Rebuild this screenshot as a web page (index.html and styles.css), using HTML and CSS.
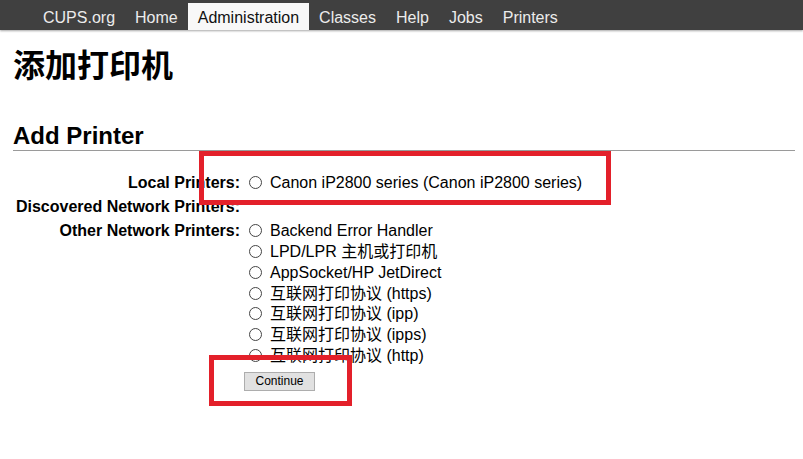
FILE: index.html
```html
<!DOCTYPE html>
<html lang="zh-CN">
<head>
<meta charset="utf-8">
<title>添加打印机 - CUPS</title>
<link rel="stylesheet" href="styles.css">
</head>
<body>
<nav class="topbar">
  <ul class="nav">
    <li class="nav-item">CUPS.org</li>
    <li class="nav-item">Home</li>
    <li class="nav-item active">Administration</li>
    <li class="nav-item">Classes</li>
    <li class="nav-item">Help</li>
    <li class="nav-item">Jobs</li>
    <li class="nav-item">Printers</li>
  </ul>
</nav>
<main class="page">
  <h1 class="title">添加打印机</h1>
  <h2 class="section">Add Printer</h2>
  <form class="printer-form">
    <div class="field-grid">
      <div class="label">Local Printers:</div>
      <div class="value">
        <label class="option"><input type="radio" name="dev" class="radio">Canon iP2800 series (Canon iP2800 series)</label>
      </div>
      <div class="label">Discovered Network Printers:</div>
      <div class="value"></div>
      <div class="label">Other Network Printers:</div>
      <div class="value">
        <label class="option"><input type="radio" name="dev" class="radio">Backend Error Handler</label>
        <label class="option"><input type="radio" name="dev" class="radio">LPD/LPR 主机或打印机</label>
        <label class="option"><input type="radio" name="dev" class="radio">AppSocket/HP JetDirect</label>
        <label class="option"><input type="radio" name="dev" class="radio">互联网打印协议 (https)</label>
        <label class="option"><input type="radio" name="dev" class="radio">互联网打印协议 (ipp)</label>
        <label class="option"><input type="radio" name="dev" class="radio">互联网打印协议 (ipps)</label>
        <label class="option"><input type="radio" name="dev" class="radio">互联网打印协议 (http)</label>
      </div>
    </div>
    <div class="actions"><button type="button" class="btn">Continue</button></div>
  </form>
</main>
<div class="mark mark-local"></div>
<div class="mark mark-continue"></div>
</body>
</html>
```

FILE: styles.css
```css
html, body {
  margin: 0;
  padding: 0;
  background: #ffffff;
}

body {
  font-family: "Liberation Sans", "Noto Sans CJK SC", sans-serif;
  font-size: 16px;
  color: #000000;
  position: relative;
  height: 459px;
  overflow: hidden;
}

.topbar {
  height: 30px;
  background: #404040;
  box-shadow: 0 1px 2px rgba(0, 0, 0, 0.35);
}

.nav {
  list-style: none;
  margin: 0;
  padding: 0 0 0 33px;
  display: flex;
}

.nav-item {
  margin-top: 3px;
  height: 27px;
  padding: 2px 10px 0;
  box-sizing: border-box;
  line-height: 25px;
  color: #ececec;
}

.nav-item.active {
  background: #f8f8f8;
  color: #111111;
}

.page {
  padding: 0 8px 0 13px;
}

.title {
  margin: 16px 0 0;
  font-size: 32px;
  line-height: 40px;
  font-weight: bold;
}

.section {
  margin: 35.5px 0 0;
  font-size: 24px;
  line-height: 28px;
  font-weight: bold;
  padding-bottom: 0.5px;
  border-bottom: 1px solid #9a9a9a;
}

.printer-form {
  margin: 0;
}

.field-grid {
  margin-top: 21.5px;
  display: grid;
  grid-template-columns: 227px 1fr;
  column-gap: 4px;
  row-gap: 3.6px;
  line-height: 20.8px;
}

.label {
  text-align: right;
  font-weight: bold;
}

.value {
  display: flex;
  flex-direction: column;
}

.option {
  display: block;
  white-space: nowrap;
}

.radio {
  appearance: none;
  -webkit-appearance: none;
  width: 13px;
  height: 13px;
  margin: 0 8px 0 5px;
  border: 1px solid #444444;
  border-radius: 50%;
  box-sizing: border-box;
  vertical-align: -1px;
  background: #ffffff;
}

.actions {
  margin-top: 5px;
  padding-left: 231px;
}

.btn {
  width: 71px;
  height: 19px;
  padding: 0;
  font-family: "Liberation Sans", sans-serif;
  font-size: 12px;
  color: #000000;
  background: #e1e1e1;
  border: 1px solid #adadad;
  border-radius: 0;
  display: block;
}

.mark {
  position: absolute;
  border: 5px solid #e3202a;
  box-sizing: border-box;
}

.mark-local {
  left: 199px;
  top: 151px;
  width: 412px;
  height: 54px;
}

.mark-continue {
  left: 209px;
  top: 355px;
  width: 143px;
  height: 51px;
}
```
